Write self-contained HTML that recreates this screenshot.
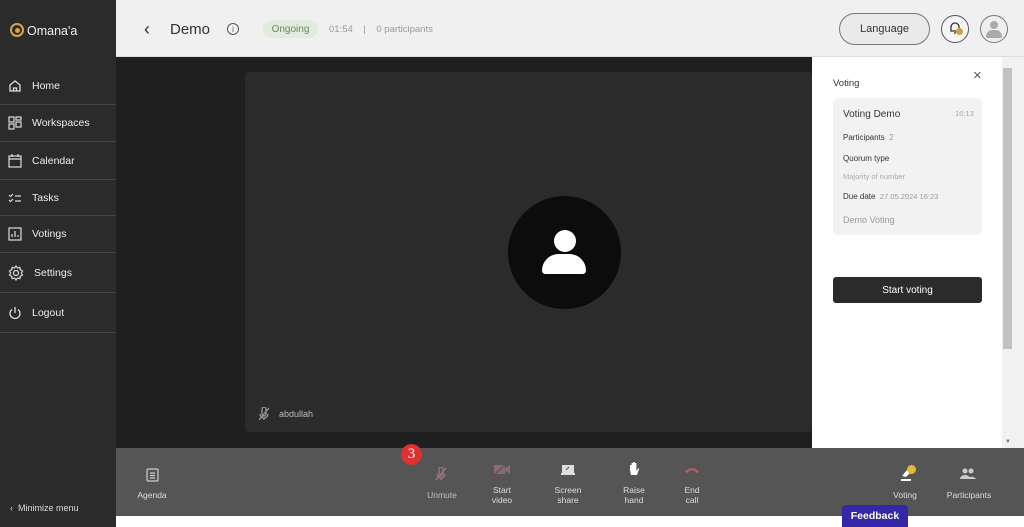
<!DOCTYPE html>
<html><head><style>
*{margin:0;padding:0;box-sizing:border-box}
body{width:1024px;height:527px;overflow:hidden;font-family:"Liberation Sans",sans-serif;background:#fff;position:relative}
.a{position:absolute}
.side{left:0;top:0;width:116px;height:527px;background:#2b2b2b;color:#eee}
.nav{position:absolute;left:0;width:116px;font-size:10.5px;display:flex;align-items:center;border-bottom:1px solid #444}
.nav svg{margin:0 10px 0 8px}
.bar{left:116px;top:448px;width:908px;height:68px;background:#555;color:#ddd;font-size:8.5px;text-align:center;line-height:10px}
.btn{position:absolute;top:466px;color:#ddd;font-size:8.5px;text-align:center;line-height:10px}
.c{display:flex;align-items:center;justify-content:center}
</style></head><body>
<div class="a side">
 <div class="a" style="left:10px;top:23px;width:14px;height:14px;border:2.5px solid #d9a441;border-radius:50%"></div>
 <div class="a" style="left:15px;top:28px;width:5px;height:5px;background:#d9a441;border-radius:50%"></div>
 <div class="a" style="left:27px;top:24px;font-size:12.5px;color:#eee">Omana'a</div>
 <div class="nav" style="top:68px;height:37px"><svg width="14" height="14" viewBox="0 0 14 14" fill="none" stroke="#ddd" stroke-width="1.3"><path d="M2 6l5-4 5 4v6H2z M5.5 12V9h3v3"/></svg>Home</div>
 <div class="nav" style="top:105px;height:37px"><svg width="14" height="14" viewBox="0 0 14 14" fill="none" stroke="#ddd" stroke-width="1.2"><rect x="1" y="1" width="5" height="5"/><rect x="8" y="1" width="5" height="3"/><rect x="1" y="8" width="5" height="5"/><rect x="8" y="6" width="5" height="5"/></svg>Workspaces</div>
 <div class="nav" style="top:142px;height:38px"><svg width="14" height="14" viewBox="0 0 14 14" fill="none" stroke="#ddd" stroke-width="1.2"><rect x="1" y="2" width="12" height="11"/><path d="M1 5h12M4 0v3M10 0v3"/></svg>Calendar</div>
 <div class="nav" style="top:180px;height:36px"><svg width="14" height="14" viewBox="0 0 14 14" fill="none" stroke="#ddd" stroke-width="1.2"><path d="M1 4l1.5 1.5L5 3M1 9l1.5 1.5L5 8M7 5h6M7 10h6"/></svg>Tasks</div>
 <div class="nav" style="top:216px;height:37px"><svg width="14" height="14" viewBox="0 0 14 14" fill="none" stroke="#ddd" stroke-width="1.2"><rect x="1" y="1" width="12" height="12"/><path d="M4 10V7M7 10V4M10 10V8"/></svg>Votings</div>
 <div class="nav" style="top:253px;height:40px"><svg width="16" height="16" viewBox="0 0 16 16" fill="none" stroke="#ddd" stroke-width="1.2"><circle cx="8" cy="8" r="2.5"/><path d="M8 1l1.5 2 2.4-.6.4 2.4 2.2 1.2-1.2 2 1.2 2-2.2 1.2-.4 2.4-2.4-.6L8 15l-1.5-2-2.4.6-.4-2.4-2.2-1.2 1.2-2-1.2-2 2.2-1.2.4-2.4 2.4.6z"/></svg>Settings</div>
 <div class="nav" style="top:293px;height:40px"><svg width="14" height="14" viewBox="0 0 14 14" fill="none" stroke="#ddd" stroke-width="1.3"><path d="M7 1v6M4 3.5a5 5 0 1 0 6 0"/></svg>Logout</div>
 <div class="a" style="left:10px;top:503px;font-size:9px;color:#ddd">‹&nbsp; Minimize menu</div>
</div>
<div class="a" style="left:116px;top:0;width:908px;height:57px;background:#f0f0f0;border-bottom:1px solid #ddd"></div>
<div class="a" style="left:144px;top:19px;font-size:18px;color:#333">‹</div>
<div class="a" style="left:170px;top:21px;font-size:15px;color:#333">Demo</div>
<div class="a c" style="left:227px;top:23px;width:12px;height:12px;border:1.3px solid #555;border-radius:50%;font-size:8px;color:#555">i</div>
<div class="a c" style="left:263px;top:20px;width:55px;height:18px;background:#e2ecdc;border-radius:9px;font-size:10px;color:#6a8a60">Ongoing</div>
<div class="a" style="left:329px;top:24px;font-size:9.5px;color:#999">01:54 &nbsp;&nbsp; | &nbsp;&nbsp; 0 participants</div>
<div class="a c" style="left:839px;top:13px;width:91px;height:32px;border:1.3px solid #777;border-radius:16px;background:#eaeaea;font-size:11px;color:#333">Language</div>
<div class="a" style="left:941px;top:15px;width:28px;height:28px;border:1.3px solid #555;border-radius:50%;background:#f5f5f5"></div>
<svg class="a" style="left:948px;top:21px" width="14" height="14" viewBox="0 0 14 14" fill="none" stroke="#333" stroke-width="1.3"><path d="M3 10V6a4 4 0 0 1 8 0v4H3zM6 12h2"/></svg>
<div class="a" style="left:956px;top:28px;width:7px;height:7px;background:#c9a23e;border-radius:50%"></div>
<div class="a" style="left:980px;top:15px;width:28px;height:28px;border:1.3px solid #777;border-radius:50%;background:#eee;overflow:hidden"><div class="a" style="left:9px;top:5px;width:8px;height:8px;background:#aaa;border-radius:50%"></div><div class="a" style="left:5px;top:14px;width:16px;height:8px;background:#aaa;border-radius:8px 8px 2px 2px"></div></div>
<div class="a" style="left:116px;top:57px;width:696px;height:391px;background:#1f1f1f"></div>
<div class="a" style="left:245px;top:72px;width:567px;height:360px;background:#2b2b2b;border-radius:4px"></div>
<div class="a" style="left:508px;top:196px;width:113px;height:113px;background:#0c0c0c;border-radius:50%"></div>
<div class="a" style="left:554px;top:230px;width:22px;height:22px;background:#fff;border-radius:50%"></div>
<div class="a" style="left:542px;top:254px;width:44px;height:20px;background:#fff;border-radius:20px 20px 4px 4px"></div>
<svg class="a" style="left:258px;top:407px" width="12" height="14" viewBox="0 0 12 14" fill="none" stroke="#999" stroke-width="1.3"><path d="M4 2a2 2 0 0 1 4 0v5a2 2 0 0 1-4 0zM2 7a4 4 0 0 0 8 0M6 11v2M1 13L11 1"/></svg>
<div class="a" style="left:279px;top:409px;font-size:9px;color:#bbb">abdullah</div>
<div class="a" style="left:812px;top:57px;width:190px;height:391px;background:#fff"></div>
<div class="a" style="left:1002px;top:57px;width:22px;height:391px;background:#f1f1f1"></div>
<div class="a" style="left:1003px;top:68px;width:9px;height:281px;background:#c1c1c1"></div>
<div class="a" style="left:833px;top:78px;font-size:9.5px;color:#333">Voting</div>
<div class="a" style="left:973px;top:67px;font-size:15px;color:#555">×</div>
<div class="a" style="left:833px;top:98px;width:149px;height:137px;background:#f2f2f2;border-radius:5px"></div>
<div class="a" style="left:843px;top:109px;font-size:10px;color:#333">Voting Demo</div>
<div class="a" style="left:955px;top:109px;font-size:7.5px;color:#aaa">16:13</div>
<div class="a" style="left:843px;top:133px;font-size:8px;color:#333">Participants &nbsp;<span style="color:#999">2</span></div>
<div class="a" style="left:843px;top:154px;font-size:8px;color:#333">Quorum type</div>
<div class="a" style="left:843px;top:172px;font-size:7.5px;color:#aaa">Majority of number</div>
<div class="a" style="left:843px;top:192px;font-size:8px;color:#333">Due date &nbsp;<span style="color:#999;font-size:7.5px">27.05.2024 16:23</span></div>
<div class="a" style="left:843px;top:215px;font-size:9px;color:#999">Demo Voting</div>
<div class="a c" style="left:833px;top:277px;width:149px;height:26px;background:#2b2b2b;border-radius:3px;color:#fff;font-size:10px">Start voting</div>
<div class="a" style="left:1005px;top:439px;font-size:6px;color:#777">▼</div>
<div class="a bar"></div>
<svg class="a" style="left:146px;top:468px" width="13" height="14" viewBox="0 0 13 14" fill="none" stroke="#ccc" stroke-width="1.2"><rect x="1" y="1" width="11" height="12" rx="1"/><path d="M4 5h5M4 7.5h5M4 10h5"/></svg>
<div class="btn" style="left:128px;top:490px;width:48px">Agenda</div>
<div class="a c" style="left:401px;top:444px;width:21px;height:21px;background:#e03030;border-radius:50%;color:#fff;font-family:'Liberation Serif',serif;font-size:15px">3</div>
<svg class="a" style="left:435px;top:467px" width="12" height="14" viewBox="0 0 12 14" fill="none" stroke="#a07880" stroke-width="1.3"><path d="M4 2a2 2 0 0 1 4 0v5a2 2 0 0 1-4 0zM2 7a4 4 0 0 0 8 0M6 11v2M1 13L11 1"/></svg>
<div class="btn" style="left:417px;top:490px;width:50px;color:#c8b8c0">Unmute</div>
<svg class="a" style="left:494px;top:464px" width="16" height="11" viewBox="0 0 16 11"><rect x="0" y="1" width="11" height="9" fill="#8a6a70"/><path d="M11 4l5-3v9l-5-3z" fill="#8a6a70"/><path d="M1 10L11 1" stroke="#555" stroke-width="1.3"/></svg>
<div class="btn" style="left:480px;top:485px;width:44px">Start<br>video</div>
<svg class="a" style="left:561px;top:464px" width="14" height="11" viewBox="0 0 14 11"><rect x="1" y="1" width="12" height="8" fill="#ddd"/><rect x="0" y="9" width="14" height="2" fill="#ddd"/><path d="M5 6l3-3" stroke="#555"/></svg>
<div class="btn" style="left:545px;top:485px;width:46px">Screen<br>share</div>
<svg class="a" style="left:628px;top:461px" width="12" height="16" viewBox="0 0 12 16"><path d="M2 9V4h1.6v5V2h1.6v7V1h1.6v8V2h1.6v8l1.6-2.5h1.2L9 14H3L2 9z" fill="#fff"/></svg>
<div class="btn" style="left:612px;top:485px;width:44px">Raise<br>hand</div>
<svg class="a" style="left:684px;top:466px" width="16" height="8" viewBox="0 0 16 8"><path d="M1 6C3 1 13 1 15 6l-3 1-1-2C9 4 7 4 5 5L4 7z" fill="#b8606a"/></svg>
<div class="btn" style="left:675px;top:485px;width:34px">End<br>call</div>
<svg class="a" style="left:898px;top:466px" width="16" height="16" viewBox="0 0 16 16"><path d="M3 13h10v2H3z M4 10l5-6 3 3-4 4z" fill="#fff"/></svg>
<div class="a" style="left:907px;top:465px;width:9px;height:9px;background:#e8b63c;border-radius:50%"></div>
<div class="btn" style="left:885px;top:490px;width:40px">Voting</div>
<svg class="a" style="left:960px;top:468px" width="16" height="11" viewBox="0 0 16 11" fill="#ccc"><circle cx="5" cy="3" r="2.5"/><circle cx="11" cy="3" r="2.5"/><path d="M0 11a5 4 0 0 1 10 0zM7 11a5 4 0 0 1 9 0z"/></svg>
<div class="btn" style="left:940px;top:490px;width:58px">Participants</div>
<div class="a c" style="left:842px;top:505px;width:66px;height:22px;background:#3528a8;border-radius:4px 4px 0 0;color:#fff;font-size:10.5px;font-weight:bold">Feedback</div>
</body></html>
